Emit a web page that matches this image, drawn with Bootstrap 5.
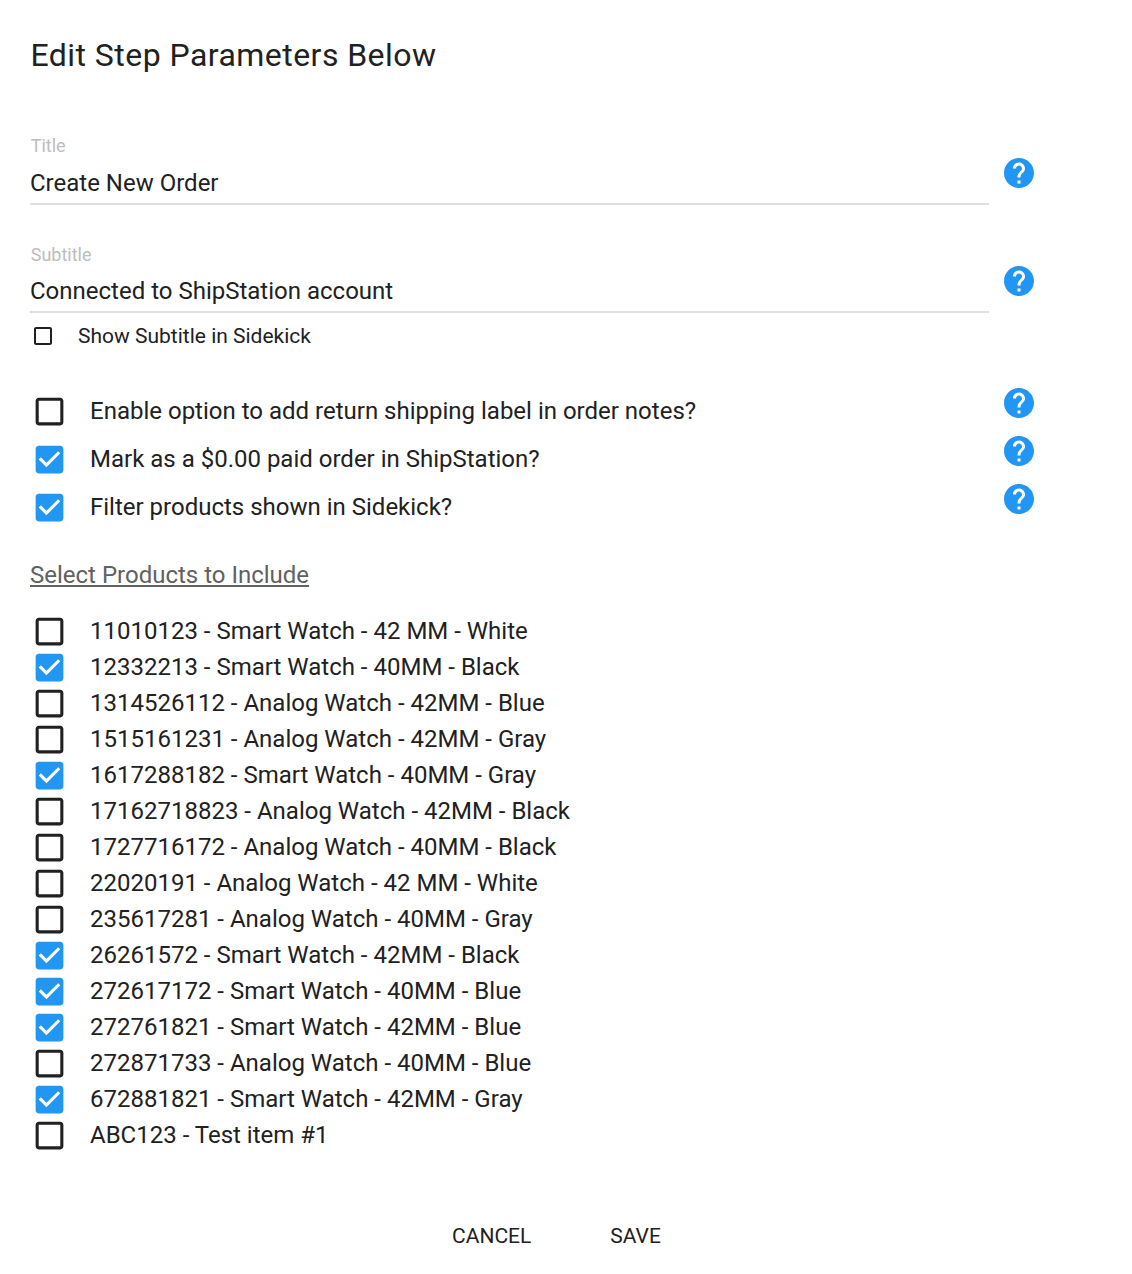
<!DOCTYPE html>
<html lang="en">
<head>
<meta charset="utf-8">
<title>Edit Step Parameters</title>
<link href="https://cdn.jsdelivr.net/npm/bootstrap@5.3.0/dist/css/bootstrap.min.css" rel="stylesheet">
<style>
body{font-family:Roboto,"Liberation Sans",sans-serif;color:#212121;background:#fff;}
.sheet{width:1132px;height:1274px;padding:0 0 0 30px;display:flex;flex-direction:column;}
.dlg-title{font-size:32px;font-weight:400;line-height:40px;margin:35px 0 0 .5px;color:#212121;letter-spacing:.45px;}
.field-row{display:flex;align-items:flex-start;width:1010px;}
.field-body{width:959px;}
.field-label{font-size:18px;line-height:18px;color:#bdbdbd;display:block;margin-left:.7px;}
.field-value{border:0;border-bottom:2px solid #e0e0e0;border-radius:0;padding:0 0 6px;font-size:24px;line-height:28px;color:#212121;height:auto;background:transparent;margin-top:14px;}
.title-row{margin-top:62px;}
.sub-row{margin-top:41px;}
.sub-row .field-value{margin-top:13px;}
.help-ico{width:36px;height:36px;fill:#2196f3;margin-left:12px;flex:none;display:block;}
.title-row .help-ico{margin-top:18px}
.sub-row .help-ico{margin-top:17px}
.mini-check{display:flex;align-items:center;height:24px;margin-top:11px;font-size:21px;line-height:24px;}
.mini-check svg{width:24px;height:24px;margin-left:1px;margin-right:23px;fill:#212121;flex:none;}
.opts{margin-top:39px;width:1007px;}
.opt-row{display:flex;align-items:center;height:48px;}
.opt-row .help-ico{margin-left:auto;margin-top:-16px;}
.chk{display:flex;align-items:center;font-size:24px;margin:0;}
.chk svg{width:37px;height:37px;flex:none;margin-right:22.5px;margin-left:.5px;}
.off{fill:#212121}
.on{fill:#2196f3}
.pick-title{font-size:24px;line-height:28px;color:#616161;text-decoration:underline;text-underline-offset:2px;text-decoration-thickness:1.5px;margin:30px 0 0;font-weight:400;}
.plist{margin-top:24px;}
.plist .chk{height:36px;line-height:36px;}
.actions{display:flex;justify-content:center;gap:79px;margin-top:69px;padding-right:49px;}
.act-btn{font-size:21px;line-height:28px;color:#212121;padding:0;border:0;border-radius:0;text-transform:uppercase;background:transparent;}
</style>
</head>
<body>
<svg width="0" height="0" class="position-absolute">
<defs>
<symbol id="ic-help" viewBox="0 0 24 24"><path d="M12 2C6.48 2 2 6.48 2 12s4.48 10 10 10 10-4.48 10-10S17.52 2 12 2zm1 17h-2v-2h2v2zm2.07-7.75l-.9.92C13.45 12.9 13 13.5 13 15h-2v-.5c0-1.1.45-2.1 1.17-2.83l1.24-1.26c.37-.36.59-.86.59-1.41 0-1.1-.9-2-2-2s-2 .9-2 2H8c0-2.21 1.79-4 4-4s4 1.79 4 4c0 .88-.36 1.68-.93 2.25z"/></symbol>
<symbol id="ic-off" viewBox="0 0 24 24"><path d="M19 5v14H5V5h14m0-2H5c-1.1 0-2 .9-2 2v14c0 1.1.9 2 2 2h14c1.1 0 2-.9 2-2V5c0-1.11-.9-2-2-2z"/></symbol>
<symbol id="ic-on" viewBox="0 0 24 24"><path d="M19 3H5c-1.11 0-2 .9-2 2v14c0 1.1.89 2 2 2h14c1.1 0 2-.89 2-2V5c0-1.1-.9-2-2-2zm-9 14l-5-5 1.41-1.41L10 14.17l7.59-7.59L19 8l-9 9z"/></symbol>
</defs>
</svg>
<div class="sheet">
  <h1 class="dlg-title">Edit Step Parameters Below</h1>

  <div class="field-row title-row">
    <div class="field-body">
      <span class="field-label">Title</span>
      <div class="form-control field-value">Create New Order</div>
    </div>
    <svg class="help-ico"><use href="#ic-help"/></svg>
  </div>

  <div class="field-row sub-row">
    <div class="field-body">
      <span class="field-label">Subtitle</span>
      <div class="form-control field-value">Connected to ShipStation account</div>
    </div>
    <svg class="help-ico"><use href="#ic-help"/></svg>
  </div>
  <label class="mini-check"><svg><use href="#ic-off"/></svg>Show Subtitle in Sidekick</label>

  <div class="opts">
    <div class="opt-row"><label class="chk"><svg class="off"><use href="#ic-off"/></svg>Enable option to add return shipping label in order notes?</label><svg class="help-ico"><use href="#ic-help"/></svg></div>
    <div class="opt-row"><label class="chk"><svg class="on"><use href="#ic-on"/></svg>Mark as a $0.00 paid order in ShipStation?</label><svg class="help-ico"><use href="#ic-help"/></svg></div>
    <div class="opt-row"><label class="chk"><svg class="on"><use href="#ic-on"/></svg>Filter products shown in Sidekick?</label><svg class="help-ico"><use href="#ic-help"/></svg></div>
  </div>

  <h2 class="pick-title">Select Products to Include</h2>

  <div class="plist">
    <label class="chk"><svg class="off"><use href="#ic-off"/></svg>11010123 - Smart Watch - 42 MM - White</label>
    <label class="chk"><svg class="on"><use href="#ic-on"/></svg>12332213 - Smart Watch - 40MM - Black</label>
    <label class="chk"><svg class="off"><use href="#ic-off"/></svg>1314526112 - Analog Watch - 42MM - Blue</label>
    <label class="chk"><svg class="off"><use href="#ic-off"/></svg>1515161231 - Analog Watch - 42MM - Gray</label>
    <label class="chk"><svg class="on"><use href="#ic-on"/></svg>1617288182 - Smart Watch - 40MM - Gray</label>
    <label class="chk"><svg class="off"><use href="#ic-off"/></svg>17162718823 - Analog Watch - 42MM - Black</label>
    <label class="chk"><svg class="off"><use href="#ic-off"/></svg>1727716172 - Analog Watch - 40MM - Black</label>
    <label class="chk"><svg class="off"><use href="#ic-off"/></svg>22020191 - Analog Watch - 42 MM - White</label>
    <label class="chk"><svg class="off"><use href="#ic-off"/></svg>235617281 - Analog Watch - 40MM - Gray</label>
    <label class="chk"><svg class="on"><use href="#ic-on"/></svg>26261572 - Smart Watch - 42MM - Black</label>
    <label class="chk"><svg class="on"><use href="#ic-on"/></svg>272617172 - Smart Watch - 40MM - Blue</label>
    <label class="chk"><svg class="on"><use href="#ic-on"/></svg>272761821 - Smart Watch - 42MM - Blue</label>
    <label class="chk"><svg class="off"><use href="#ic-off"/></svg>272871733 - Analog Watch - 40MM - Blue</label>
    <label class="chk"><svg class="on"><use href="#ic-on"/></svg>672881821 - Smart Watch - 42MM - Gray</label>
    <label class="chk"><svg class="off"><use href="#ic-off"/></svg>ABC123 - Test item #1</label>
  </div>

  <div class="actions">
    <button type="button" class="btn act-btn">Cancel</button>
    <button type="button" class="btn act-btn">Save</button>
  </div>
</div>
</body>
</html>
